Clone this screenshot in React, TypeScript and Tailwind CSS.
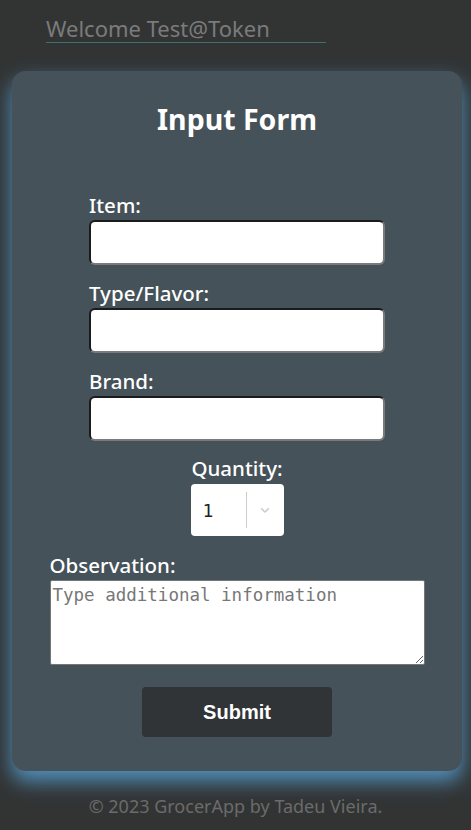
import React from "react";

const muli = { fontFamily: "'Noto Sans', Lato, sans-serif" };

function Field({ label }: { label: string }) {
  return (
    <div className="flex flex-col">
      <label className="text-[20.5px] font-medium leading-[24px] text-white mb-[3px]" style={muli}>{label}</label>
      <input
        type="text"
        className="h-[45px] w-[296px] rounded-[6px] border-2 border-t-[#1b1b1b] border-l-[#1b1b1b] border-b-[#7a7a7a] border-r-[#7a7a7a] bg-white"
      />
    </div>
  );
}

export default function App() {
  return (
    <div className="min-h-[830px] w-full bg-[#323434] flex flex-col" style={muli}>
      <div className="pl-[46px] pt-[14px] h-[71px]">
        <div className="w-[280px] border-b border-[#3f6d70] text-[22px] leading-[28px] text-[#7b7b7b]">
          Welcome Test@Token
        </div>
      </div>
      <div className="mx-[12px] w-[450px] rounded-[14px] bg-[#455259] shadow-[0_10px_20px_rgba(85,155,205,0.9)] flex flex-col items-center pt-[100px] pb-[34px] relative">
        <h1 className="absolute top-[29px] left-0 right-0 text-center text-[28.5px] font-bold text-white leading-[38px]">Input Form</h1>
        <div className="flex flex-col gap-[16px] pt-[22px]">
          <Field label="Item:" />
          <Field label="Type/Flavor:" />
          <Field label="Brand:" />
        </div>
        <div className="flex flex-col items-center mt-[15px]">
          <span className="text-[20.5px] font-medium leading-[24px] text-white">Quantity:</span>
          <div className="mt-[4px] h-[52px] w-[93px] bg-white rounded-[4px] flex items-center">
            <span className="pl-[12px] w-[55px] text-[18px] text-[#222]" style={{ fontFamily: "'DejaVu Sans Mono', monospace" }}>1</span>
            <span className="h-[36px] w-px bg-[#ccc]"></span>
            <svg className="ml-[11px]" width="14" height="14" viewBox="0 0 20 20" fill="#ccc">
              <path d="M4.516 7.548c0.436-0.446 1.043-0.481 1.576 0l3.908 3.747 3.908-3.747c0.533-0.481 1.141-0.446 1.574 0 0.436 0.445 0.408 1.197 0 1.615-0.406 0.418-4.695 4.502-4.695 4.502-0.217 0.223-0.502 0.335-0.787 0.335s-0.57-0.112-0.789-0.335c0 0-4.287-4.084-4.695-4.502s-0.436-1.17 0-1.615z" />
            </svg>
          </div>
        </div>
        <div className="flex flex-col w-[375px] mt-[17px]">
          <span className="text-[20.5px] font-medium leading-[24px] text-white mb-[3px]">Observation:</span>
          <textarea
            className="h-[85px] w-[375px] bg-white rounded-[2px] border border-[#767676] px-[2px] py-[1px] text-[17.5px] text-[#333] placeholder:text-[#777] resize-y outline-none"
            style={{ fontFamily: "'DejaVu Sans Mono', 'Liberation Mono', monospace" }}
            placeholder="Type additional information"
          />
        </div>
        <button
          className="mt-[22px] h-[50px] w-[190px] bg-[#303436] rounded-[4px] text-white text-[20px] font-bold"
          style={{ fontFamily: "'Liberation Sans', Arial, sans-serif" }}
        >
          Submit
        </button>
      </div>
      <div className="text-center text-[18px] text-[#6b6b6b] mt-[22px]" style={{ fontFamily: "'Noto Sans', 'Open Sans', sans-serif" }}>
        © 2023 GrocerApp by Tadeu Vieira.
      </div>
    </div>
  );
}
